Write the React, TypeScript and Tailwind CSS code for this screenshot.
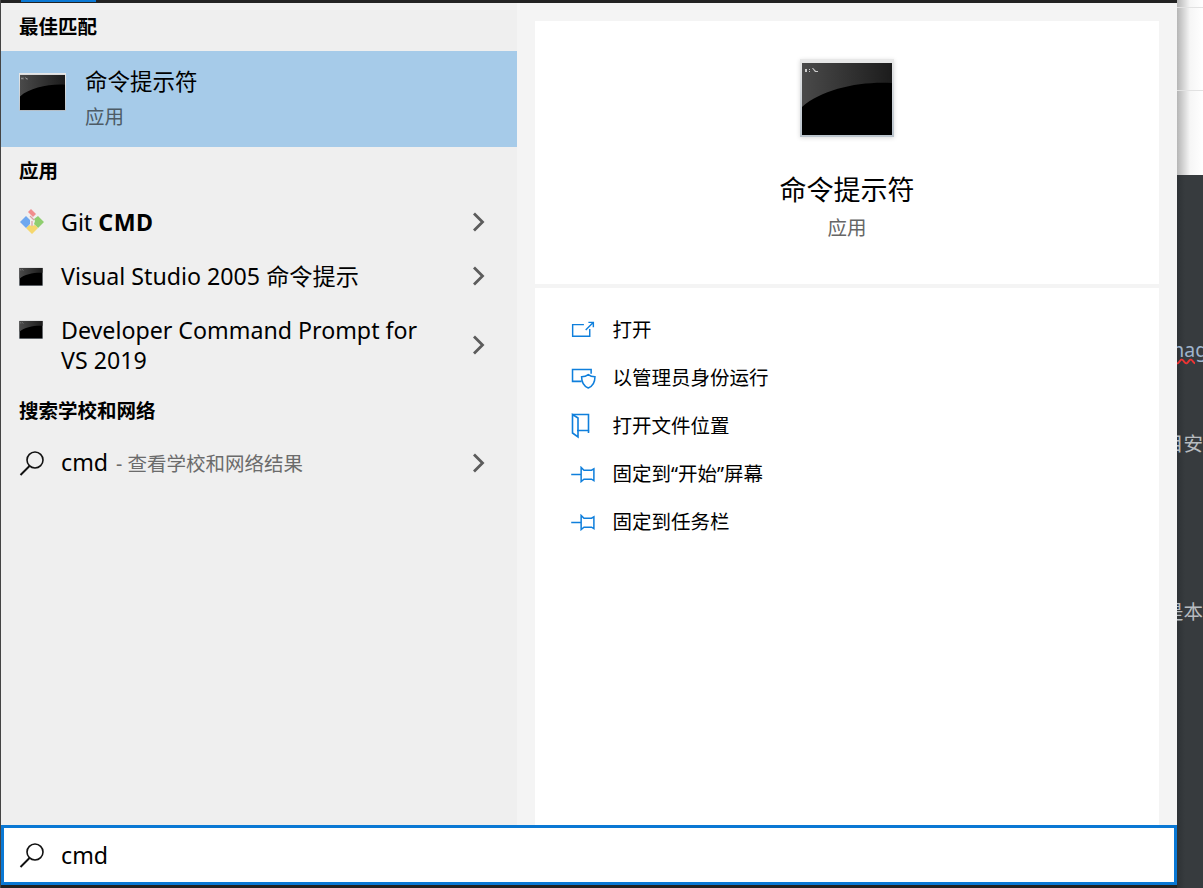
import { ReactNode } from 'react'

const font = { fontFamily: '"Noto Sans", "Noto Sans CJK SC", sans-serif' }

function TerminalIcon({ className, id }: { className: string; id: string }) {
  return (
    <svg viewBox="0 0 94 78" className={className} preserveAspectRatio="none">
      <defs>
        <linearGradient id={`${id}-glow`} x1="0" y1="0" x2="1" y2="0">
          <stop offset="0" stopColor="#4a4a4a" />
          <stop offset="1" stopColor="#1c1c1c" />
        </linearGradient>
        <linearGradient id={`${id}-frame`} x1="0" y1="0" x2="0" y2="1">
          <stop offset="0" stopColor="#e8e8e8" />
          <stop offset="1" stopColor="#b9c3cc" />
        </linearGradient>
      </defs>
      <rect x="0" y="0" width="94" height="78" fill={`url(#${id}-frame)`} />
      <rect x="2" y="4" width="90" height="72" fill="#000" />
      <path d="M2 4H92V24C60 22 22 30 2 48Z" fill={`url(#${id}-glow)`} />
      <path d="M5 10h2v3H5zM9 10h1v1H9zM9 12h1v1H9zM12 9l3 4h3v-1h-2l-3-3z" fill="#ccc" />
    </svg>
  )
}

function GitIcon() {
  return (
    <svg viewBox="0 0 26 26" className="h-[26px] w-[26px] shrink-0">
      <path d="M12 0l5 5-3 3-2-2-3-3z" fill="#f08d8d" />
      <path d="M19 7l6 6-6 6-4-4 1-3-1-2z" fill="#8fce6f" />
      <path d="M13 25l-6-6 3-3 3 1 3-1 3 3z" fill="#f5d76e" />
      <path d="M7 7l4 4v4l-4 4-6-6z" fill="#6fa8ef" />
      <path d="M11 7l4 4M13 12v5" stroke="#d9a0a0" strokeWidth="1.2" fill="none" />
    </svg>
  )
}

function Chevron() {
  return (
    <svg viewBox="0 0 13 20" className="h-[20px] w-[13px] shrink-0">
      <path d="M2 1.500l8.500 8.500-8.500 8.500" fill="none" stroke="#5c5c5c" strokeWidth="2.800" />
    </svg>
  )
}

function SearchIcon() {
  return (
    <svg viewBox="0 0 26 26" className="h-[26px] w-[26px] shrink-0">
      <circle cx="16" cy="10" r="8" fill="none" stroke="#111" strokeWidth="1.6" />
      <path d="M10.500 16L1.500 25" fill="none" stroke="#111" strokeWidth="2" />
    </svg>
  )
}

const blue = { fill: 'none', stroke: '#0f7fdc', strokeWidth: 1.6 }

function OpenIcon() {
  return (
    <svg viewBox="0 0 26 20" className="ml-px h-[18px] w-[24px]">
      <path d="M14 4H1.500V17H20.500V9" {...blue} />
      <path d="M16 10L24 2M19 1.500H24.500V7" {...blue} />
    </svg>
  )
}

function AdminIcon() {
  return (
    <svg viewBox="0 0 26 22" className="ml-px h-[21px] w-[25px]">
      <path d="M11 14H1.500V1.500H21V6" {...blue} />
      <path d="M18 7c2 1.600 4 2.200 7 2.200 0 6-2 9.800-7 11.800-5-2-7-5.800-7-11.800 3 0 5-.6 7-2.200z" {...blue} />
    </svg>
  )
}

function FolderIcon() {
  return (
    <svg viewBox="0 0 20 26" className="ml-px h-[26px] w-5">
      <path d="M2 1.500H17.500V17.500H6" {...blue} />
      <path d="M1.500 1.500L7 5V24L1.500 20Z" {...blue} />
      <path d="M17.500 17.500V20" {...blue} />
    </svg>
  )
}

function PinIcon() {
  return (
    <svg viewBox="0 0 26 18" className="ml-px h-[17px] w-[25px]">
      <path d="M0 9H10.500M10.500 1.500V16.500L13.500 14H21.500L24 15.500V3L21.500 4.500H13.500Z" {...blue} />
    </svg>
  )
}

function SectionTitle({ children, className }: { children: ReactNode; className: string }) {
  return <div className={`pl-[18px] text-[19.500px] font-bold leading-[26px] text-black ${className}`}>{children}</div>
}

function ResultRow({ icon, children, className }: { icon: ReactNode; children: ReactNode; className: string }) {
  return (
    <div className={`flex items-center pl-[18px] pr-[32px] ${className}`}>
      <div className="flex w-[42px] shrink-0 items-center self-start">{icon}</div>
      <div className="flex-1 text-[23.200px] leading-[30px] text-black">{children}</div>
      <Chevron />
    </div>
  )
}

const actions: { icon: ReactNode; label: string }[] = [
  { icon: <OpenIcon />, label: '打开' },
  { icon: <AdminIcon />, label: '以管理员身份运行' },
  { icon: <FolderIcon />, label: '打开文件位置' },
  { icon: <PinIcon />, label: '固定到“开始”屏幕' },
  { icon: <PinIcon />, label: '固定到任务栏' },
]

export default function App() {
  return (
    <div style={font} className="flex h-[888px] w-[1203px] overflow-hidden bg-[#373b3e]">
      <div className="flex w-[1177px] shrink-0 flex-col border-l border-[#444] bg-[#222]">
        <div className="h-[3px] shrink-0">
          <div className="ml-[20px] h-[2px] w-[75px] bg-[#0a78d4]" />
        </div>

        <div className="flex min-h-0 flex-1">
          <div className="w-[516px] shrink-0 bg-[#efefef]">
            <SectionTitle className="pt-[11px] pb-[11px]">最佳匹配</SectionTitle>
            <div className="flex h-[96px] items-start bg-[#a6cbe9] pl-[18px]">
              <TerminalIcon id="best" className="mt-[22px] mr-[19px] h-[38px] w-[47px] shrink-0" />
              <div className="pt-[15px]">
                <div className="text-[22.500px] leading-[32px] text-black">命令提示符</div>
                <div className="mt-[6px] text-[19.500px] leading-[26px] text-[#4d5b66]">应用</div>
              </div>
            </div>
            <SectionTitle className="pt-[11px]">应用</SectionTitle>
            <ResultRow className="mt-[11px] h-[54px]" icon={<div className="pt-[14px]"><GitIcon /></div>}>
              Git <b className="tracking-[0.5px]">CMD</b>
            </ResultRow>
            <ResultRow className="h-[54px]" icon={<div className="pt-[18px]"><TerminalIcon id="vs" className="block h-[19px] w-[24px]" /></div>}>
              Visual Studio 2005 命令提示
            </ResultRow>
            <ResultRow className="h-[84px]" icon={<div className="pt-[17px]"><TerminalIcon id="dev" className="block h-[19px] w-[24px]" /></div>}>
              Developer Command Prompt for
              <br />
              VS 2019
            </ResultRow>
            <SectionTitle className="mt-[11px]">搜索学校和网络</SectionTitle>
            <ResultRow className="mt-[12px] h-[54px]" icon={<div className="pt-[14px]"><SearchIcon /></div>}>
              cmd <span className="ml-[2px] text-[19.500px] text-[#6b6b6b]">- 查看学校和网络结果</span>
            </ResultRow>
          </div>

          <div className="flex flex-1 flex-col bg-[#f4f4f4] px-[18px] pt-[18px]">
            <div className="flex h-[263px] shrink-0 flex-col items-center bg-white pt-[38px]">
              <TerminalIcon id="large" className="h-[78px] w-[94px] drop-shadow-sm" />
              <div className="mt-[34px] text-[27px] leading-[38px] text-black">命令提示符</div>
              <div className="mt-[6px] text-[19.500px] leading-[26px] text-[#666]">应用</div>
            </div>
            <div className="mt-[4px] flex-1 bg-white pt-[18px] pl-[35px]">
              {actions.map((a) => (
                <div key={a.label} className="flex h-[48px] items-center">
                  <div className="flex w-[42.500px] shrink-0 items-center">{a.icon}</div>
                  <span className="text-[19.500px] text-black">{a.label}</span>
                </div>
              ))}
            </div>
          </div>
        </div>

        <div className="flex h-[60px] shrink-0 items-center border-[3px] border-[#0a78d4] bg-white pl-[15px]">
          <SearchIcon />
          <span className="ml-[16px] text-[23.200px] text-black">cmd</span>
        </div>
        <div className="h-[3px] shrink-0 bg-[#222]" />
      </div>

      {/* window behind the search panel, mostly covered */}
      <div className="flex min-w-0 flex-1 flex-col overflow-hidden">
        <div className="h-[175px] shrink-0 bg-gradient-to-r from-[#b5b5b5] via-[#f6f6f6] to-white">
          <div className="mt-[7px] h-px bg-[#e2e2e2]" />
          <div className="mt-[82px] h-px bg-[#e2e2e2]" />
        </div>
        <div className="flex flex-1 flex-col bg-gradient-to-r from-[#2e3235] to-[#373b3e] to-[8px] text-[19.500px] leading-[26px] text-[#b8bcc0]">
          <div className="mt-[162px] -ml-[11px] whitespace-nowrap text-[#9fb4cc] underline decoration-[#e33] decoration-wavy">mage</div>
          <div className="mt-[68px] self-end whitespace-nowrap">目安</div>
          <div className="mt-[142px] self-end whitespace-nowrap">是本</div>
        </div>
      </div>
    </div>
  )
}
